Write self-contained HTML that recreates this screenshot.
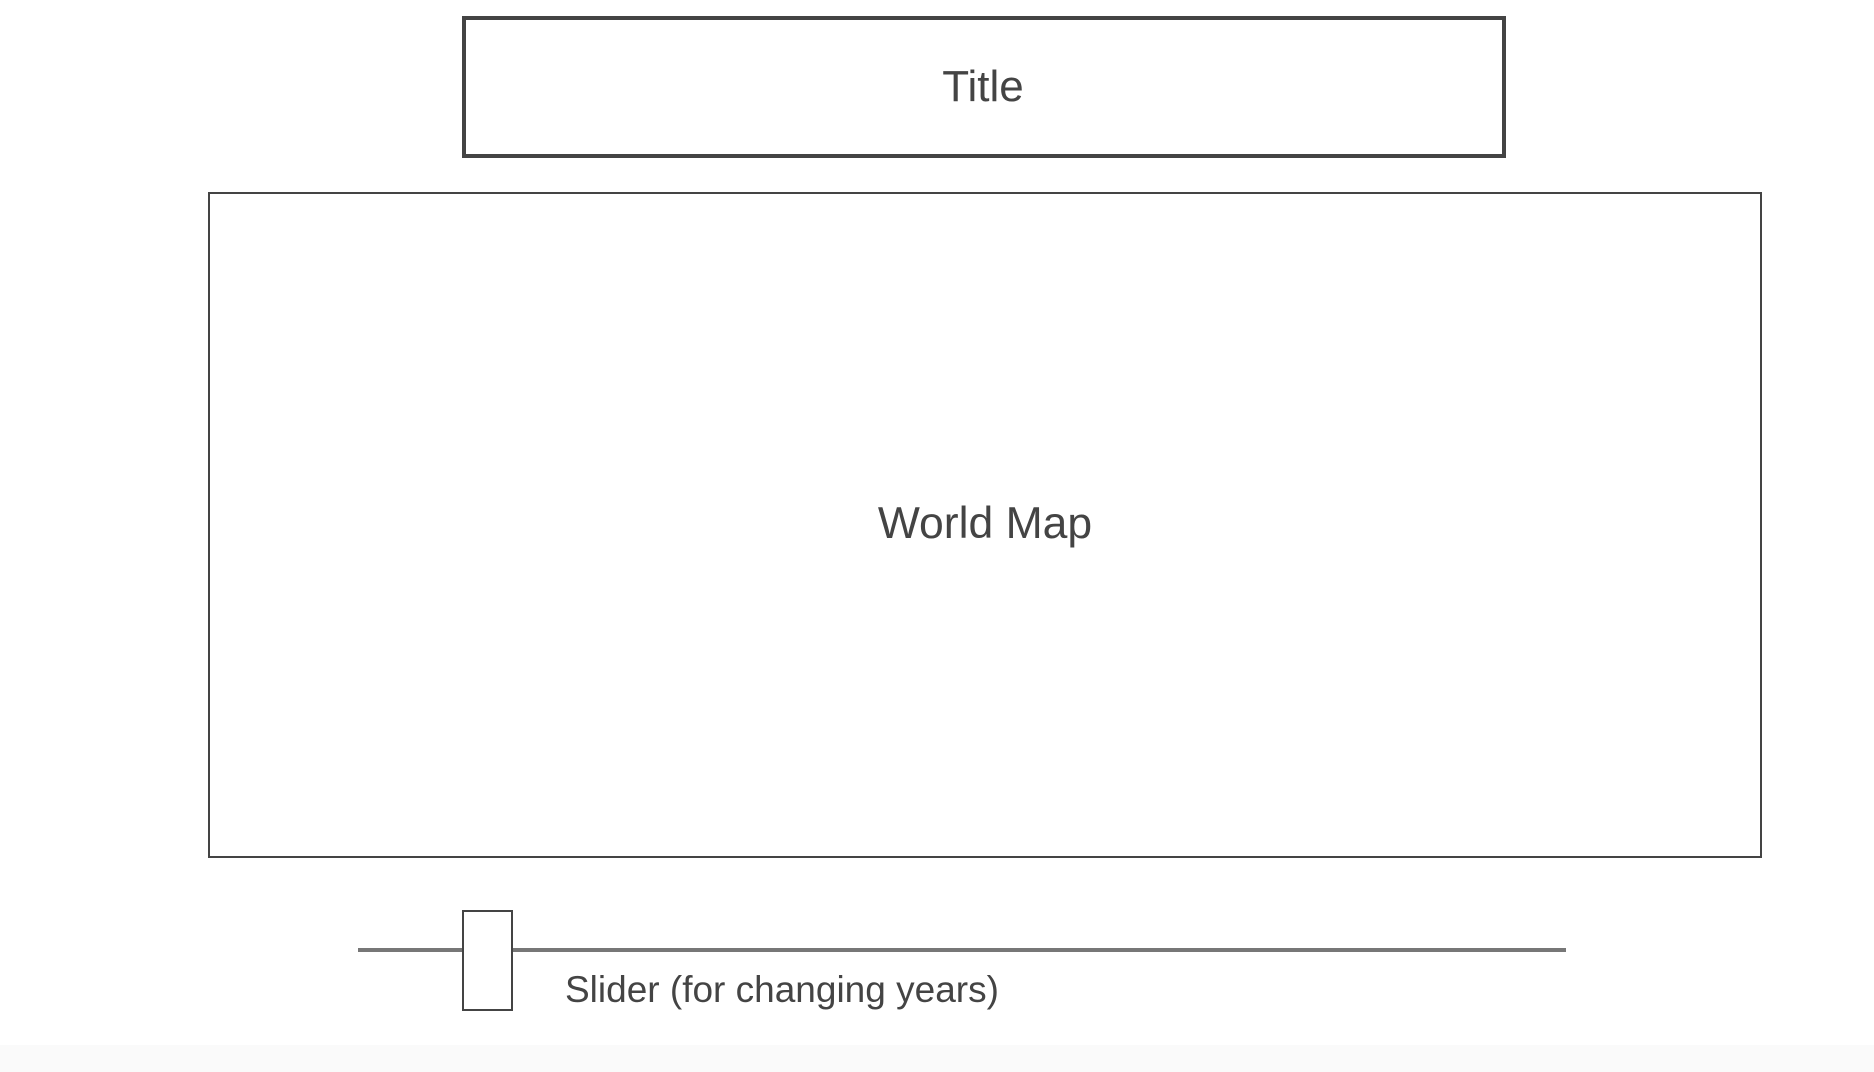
<!DOCTYPE html>
<html><head><meta charset="utf-8"><style>
html,body{margin:0;padding:0;}
body{width:1874px;height:1072px;background:#fff;position:relative;overflow:hidden;font-family:"Liberation Sans",sans-serif;color:#444;}
.abs{position:absolute;box-sizing:border-box;}
.t{position:absolute;line-height:1;white-space:nowrap;}
</style></head><body>
<div class="abs" style="left:462px;top:16px;width:1044px;height:142px;border:4px solid #444;"></div>
<div class="t" style="left:0;width:1966px;text-align:center;top:65px;font-size:44px;">Title</div>
<div class="abs" style="left:208px;top:192px;width:1554px;height:666px;border:2px solid #444;"></div>
<div class="t" style="left:0;width:1970px;text-align:center;top:502px;font-size:44.5px;">World Map</div>
<div class="abs" style="left:358px;top:948px;width:1208px;height:4px;background:#777;"></div>
<div class="abs" style="left:462px;top:910px;width:51px;height:101px;border:2px solid #444;background:#fff;"></div>
<div class="t" style="left:565px;top:971px;font-size:37px;">Slider (for changing years)</div>
<div class="abs" style="left:0;top:1045px;width:1874px;height:27px;background:#fafafa;"></div>
</body></html>
